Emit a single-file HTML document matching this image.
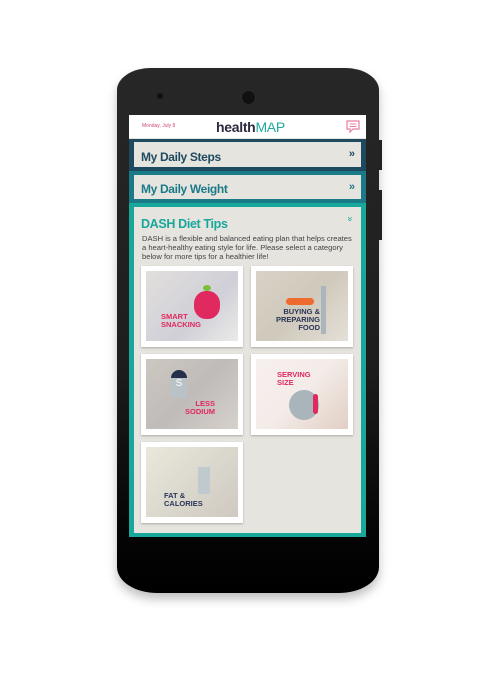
<!DOCTYPE html>
<html><head><style>
body{margin:0;width:500px;height:678px;background:#fff;position:relative;overflow:hidden;font-family:"Liberation Sans",sans-serif}
.phone{position:absolute;left:117px;top:68px;width:262px;height:525px;background:linear-gradient(#272727,#1e1e1e 55%,#050505 88%,#000);border-radius:34px 34px 40px 40px/22px 22px 26px 26px;box-shadow:0 6px 10px rgba(0,0,0,.25)}
.btn{position:absolute;background:#222;width:3px}
.screen{position:absolute;left:129px;top:115px;width:237px;height:422px;background:#e6e4df}
.hdr{height:23px;background:#fff;position:relative}
.row{position:absolute;left:0;width:237px;box-sizing:border-box}
.inner{background:#e6e4df;height:100%;box-sizing:border-box;position:relative}
.t{font-weight:bold;font-size:12px;letter-spacing:-.35px;position:absolute;left:7px}
.card{position:absolute;width:102px;height:81px;background:#fff;box-shadow:0 1px 2px rgba(0,0,0,.25)}
.img{position:absolute;left:5px;top:5px;width:92px;height:70px;opacity:.55}
.lbl{position:absolute;font-weight:bold;font-size:7.5px;line-height:8px}
</style></head><body>
<div class="phone"></div>
<div class="btn" style="left:379px;top:140px;height:30px"></div>
<div class="btn" style="left:379px;top:190px;height:50px"></div>
<div style="position:absolute;left:157px;top:93px;width:6px;height:6px;border-radius:50%;background:#111"></div>
<div style="position:absolute;left:241px;top:90px;width:13px;height:13px;border-radius:50%;background:#111;border:1px solid #2c2c2c"></div>
<div class="screen">
 <div class="hdr">
  <span style="position:absolute;left:13px;top:8px;font-size:5px;color:#d2477a">Monday, July 8</span>
  <span style="position:absolute;left:87px;top:4px;font-size:14px;letter-spacing:-.3px"><b style="color:#2a2a40">health</b><span style="color:#20aaa0">MAP</span></span>
  <svg style="position:absolute;left:217px;top:5px" width="14" height="13" viewBox="0 0 14 13"><path d="M1 1h12v8H7l-3 3V9H1z" fill="none" stroke="#e77fa3" stroke-width="1.2"/><path d="M3.5 4h7M3.5 6.5h7" stroke="#e77fa3"/></svg>
 </div>
 <div class="row" style="top:24px;height:32px;background:#1d4a5f;padding:3px 5px 4px 5px"><div class="inner"><span class="t" style="top:8px;color:#1d4a5f">My Daily Steps</span><span style="position:absolute;right:6px;top:6px;font-size:11px;font-weight:bold;color:#1d4a5f">»</span></div></div>
 <div class="row" style="top:56px;height:32px;background:#1b7a88;padding:4px 5px 4px 5px"><div class="inner"><span class="t" style="top:7px;color:#1b7a88">My Daily Weight</span><span style="position:absolute;right:6px;top:6px;font-size:11px;font-weight:bold;color:#1b7a88">»</span></div></div>
 <div class="row" style="top:88px;height:334px;background:#17a89b;padding:4px 5px 4px 5px"><div class="inner">
  <span class="t" style="top:10px;color:#17a89b;font-size:12.5px">DASH Diet Tips</span>
  <span style="position:absolute;right:8px;top:7px;font-size:9px;color:#17a89b;transform:rotate(90deg)">»</span>
  <div style="position:absolute;left:8px;top:27px;width:215px;font-size:7.6px;line-height:9px;color:#444">DASH is a flexible and balanced eating plan that helps creates a heart-healthy eating style for life. Please select a category below for more tips for a healthier life!</div>
  <div class="card" style="left:7px;top:59px"><div class="img" style="background:linear-gradient(135deg,#c9c5bf,#a9a8b8 60%,#dcd9d4)"></div>
   <div style="position:absolute;left:53px;top:25px;width:26px;height:28px;border-radius:45%;background:#e0295f"></div><div style="position:absolute;left:62px;top:19px;width:8px;height:6px;border-radius:50%;background:#7bbf3a"></div>
   <div class="lbl" style="left:20px;top:47px;color:#e0295f">SMART<br>SNACKING</div></div>
  <div class="card" style="left:117px;top:59px"><div class="img" style="background:linear-gradient(135deg,#b9ad97,#a89c85 50%,#cfc6b6)"></div>
   <div style="position:absolute;left:35px;top:32px;width:28px;height:7px;border-radius:4px;background:#ef6a2f"></div><div style="position:absolute;left:70px;top:20px;width:5px;height:48px;background:#aab6bc"></div>
   <div class="lbl" style="left:23px;top:42px;color:#2a3556;text-align:right;width:46px">BUYING &amp;<br>PREPARING<br>FOOD</div></div>
  <div class="card" style="left:7px;top:147px"><div class="img" style="background:linear-gradient(135deg,#a49a8d,#8c8480 50%,#b4aba0)"></div>
   <div style="position:absolute;left:30px;top:16px;width:16px;height:8px;border-radius:8px 8px 0 0;background:#25304d"></div><div style="position:absolute;left:30px;top:24px;width:16px;height:20px;background:#b9c2c6;color:#fff;font-size:10px;text-align:center">S</div>
   <div class="lbl" style="left:38px;top:46px;color:#e0295f;text-align:right;width:36px">LESS<br>SODIUM</div></div>
  <div class="card" style="left:117px;top:147px"><div class="img" style="background:linear-gradient(135deg,#f0e4e0,#e9dbd5 50%,#c9a892)"></div>
   <div style="position:absolute;left:38px;top:36px;width:30px;height:30px;border-radius:50%;background:#a9b5ba"></div><div style="position:absolute;left:62px;top:40px;width:5px;height:20px;border-radius:3px;background:#e0295f"></div>
   <div class="lbl" style="left:26px;top:17px;color:#e0295f">SERVING<br>SIZE</div></div>
  <div class="card" style="left:7px;top:235px"><div class="img" style="background:linear-gradient(135deg,#d9d4bd,#bdb9a6 50%,#a99c8e)"></div>
   <div style="position:absolute;left:57px;top:25px;width:12px;height:27px;background:#c0c9cd"></div>
   <div class="lbl" style="left:23px;top:50px;color:#2a3556">FAT &amp;<br>CALORIES</div></div>
 </div></div>
</div>
</body></html>
